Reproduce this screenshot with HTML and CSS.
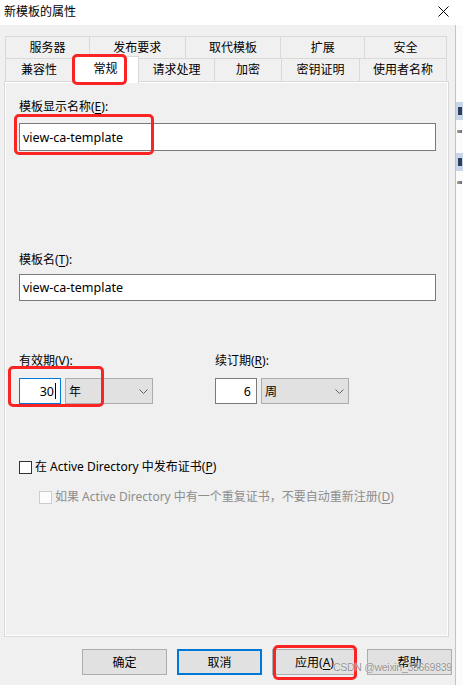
FILE: index.html
```html
<!DOCTYPE html>
<html lang="zh-CN">
<head>
    <meta charset="UTF-8">
    <meta name="viewport" content="width=device-width, initial-scale=1.0">
    <title>新模板的属性</title>
    <link rel="stylesheet" href="styles.css">
</head>
<body>
    <div class="screen">
        <div class="titlebar">
            <span class="title">新模板的属性</span>
            <svg class="close-icon" viewBox="0 0 11 11">
                <path d="M0.5 0.5L10.5 10.5M10.5 0.5L0.5 10.5"/>
            </svg>
        </div>

        <div class="main">
            <div class="dialog">
                <div class="tabs">
                    <div class="tab-row">
                        <div class="tab w84">服务器</div>
                        <div class="tab w96">发布要求</div>
                        <div class="tab w96">取代模板</div>
                        <div class="tab w84">扩展</div>
                        <div class="tab w82">安全</div>
                    </div>
                    <div class="tab-row">
                        <div class="tab w68">兼容性</div>
                        <div class="tab w66 active">常规</div>
                        <div class="tab w76">请求处理</div>
                        <div class="tab w67">加密</div>
                        <div class="tab w78">密钥证明</div>
                        <div class="tab w87">使用者名称</div>
                    </div>
                </div>

                <div class="panel">
                    <div class="field-label">模板显示名称(<u>E</u>):</div>
                    <div class="text-box tall">view-ca-template</div>

                    <div class="field-label second">模板名(<u>T</u>):</div>
                    <div class="text-box">view-ca-template</div>

                    <div class="periods">
                        <div class="period">
                            <div class="field-label">有效期(<u>V</u>):</div>
                            <div class="period-inputs">
                                <div class="num-box focused">30<span class="caret"></span></div>
                                <div class="combo">
                                    <span>年</span>
                                    <svg viewBox="0 0 9 5"><path d="M0.5 0.5L4.5 4.5L8.5 0.5"/></svg>
                                </div>
                            </div>
                        </div>
                        <div class="period">
                            <div class="field-label">续订期(<u>R</u>):</div>
                            <div class="period-inputs">
                                <div class="num-box">6</div>
                                <div class="combo">
                                    <span>周</span>
                                    <svg viewBox="0 0 9 5"><path d="M0.5 0.5L4.5 4.5L8.5 0.5"/></svg>
                                </div>
                            </div>
                        </div>
                    </div>

                    <div class="check-row">
                        <span class="check-box"></span>
                        <span>在 Active Directory 中发布证书(<u>P</u>)</span>
                    </div>
                    <div class="check-row sub disabled">
                        <span class="check-box"></span>
                        <span>如果 Active Directory 中有一个重复证书，不要自动重新注册(<u>D</u>)</span>
                    </div>
                </div>

                <div class="buttons">
                    <button class="btn">确定</button>
                    <button class="btn default">取消</button>
                    <button class="btn">应用(<u>A</u>)</button>
                    <button class="btn">帮助</button>
                </div>
            </div>

            <!-- окно позади диалога -->
            <div class="behind">
                <div class="behind-bar"><span></span></div>
                <div class="behind-mark"></div>
                <div class="behind-bar second"><span></span></div>
                <div class="behind-mark"></div>
            </div>
        </div>

        <!-- пометки поверх скриншота -->
        <div class="mark mark-tab"></div>
        <div class="mark mark-name"></div>
        <div class="mark mark-period"></div>
        <div class="mark mark-apply"></div>

        <div class="watermark">CSDN @weixin_33669839</div>
    </div>
</body>
</html>
```

FILE: styles.css
```css
* {
    margin: 0;
    padding: 0;
    box-sizing: border-box;
}

body {
    font-family: "Noto Sans", "Noto Sans CJK SC", sans-serif;
    font-size: 12px;
    color: #000;
    background: #f0f0f0;
}

.screen {
    position: relative;
    width: 463px;
    height: 685px;
    overflow: hidden;
    background: #f0f0f0;
}

u {
    text-decoration: underline;
    text-underline-offset: 2px;
}

/* заголовок окна */
.titlebar {
    height: 25px;
    background: #fff;
    display: flex;
    align-items: center;
    justify-content: space-between;
    padding: 0 14px 0 4px;
}

.title {
    line-height: 16px;
    margin-top: -1px;
}

.close-icon {
    width: 11px;
    height: 11px;
    margin-top: -2px;
    fill: none;
    stroke: #000;
    stroke-width: 1;
}

.main {
    display: flex;
    height: 660px;
}

.dialog {
    width: 455px;
}

/* вкладки */
.tabs {
    margin: 11px 0 0 5px;
    width: 442px;
}

.tab-row {
    display: flex;
}

.tab {
    height: 22px;
    display: flex;
    align-items: center;
    justify-content: center;
    border: 1px solid #d9d9d9;
    border-bottom: none;
    margin-left: -1px;
    background: #f0f0f0;
    line-height: 16px;
}

.tab-row .tab:first-child {
    margin-left: 0;
}

.tab-row + .tab-row .tab {
    height: 23px;
}

.tab.active {
    position: relative;
    z-index: 2;
    height: 27px !important;
    margin-top: -2px;
    margin-bottom: -2px;
    background: #fff;
    align-items: flex-start;
    padding-top: 4px;
}

.w66 { width: 67px; }
.w67 { width: 68px; }
.w68 { width: 68px; }
.w76 { width: 77px; }
.w78 { width: 79px; }
.w82 { width: 83px; }
.w84 { width: 85px; }
.w87 { width: 88px; }
.w96 { width: 97px; }

/* страница свойств */
.panel {
    position: relative;
    margin-left: 4px;
    width: 445px;
    height: 556px;
    border: 1px solid #d9d9d9;
    box-shadow: inset 1px 1px 0 #fff, inset -1px -1px 0 #fff;
    padding: 17px 0 0 14px;
}

.field-label {
    line-height: 16px;
    margin-bottom: 8px;
}

.field-label.second {
    margin-top: 101px;
    margin-bottom: 6px;
}

.text-box {
    width: 417px;
    height: 27px;
    border: 1px solid #7a7a7a;
    background: #fff;
    padding-left: 3px;
    display: flex;
    align-items: center;
    font-size: 12.5px;
}

.text-box.tall {
    height: 28px;
}

.periods {
    display: flex;
    margin-top: 52px;
}

.period {
    width: 196px;
}

.period .field-label {
    margin-bottom: 9px;
}

.period-inputs {
    display: flex;
    gap: 4px;
}

.num-box {
    width: 42px;
    height: 26px;
    border: 1px solid #7a7a7a;
    background: #fff;
    display: flex;
    align-items: center;
    justify-content: flex-end;
    padding-right: 5px;
    font-size: 12.5px;
}

.num-box.focused {
    border-color: #0078d7;
    padding-right: 4px;
}

.caret {
    width: 1px;
    height: 16px;
    background: #000;
    margin-left: 1px;
}

.combo {
    width: 88px;
    height: 26px;
    border: 1px solid #adadad;
    background: #e1e1e1;
    display: flex;
    align-items: center;
    justify-content: space-between;
    padding: 0 4px 0 3px;
}

.combo svg {
    width: 9px;
    height: 5px;
    fill: none;
    stroke: #606060;
    stroke-width: 1;
}

/* флажки */
.check-row {
    display: flex;
    align-items: center;
    gap: 3px;
    line-height: 16px;
    margin-top: 55px;
    font-size: 12px;
}

.check-box {
    width: 13px;
    height: 13px;
    border: 1px solid #333;
    background: #fff;
    flex-shrink: 0;
}

.check-row.sub {
    margin-top: 14px;
    padding-left: 20px;
}

.check-row.disabled {
    color: #8d8d8d;
}

.check-row.disabled .check-box {
    border-color: #cccccc;
    background: #fcfcfc;
}

/* кнопки */
.buttons {
    display: flex;
    gap: 10px;
    padding-left: 82px;
    margin-top: 12px;
}

.btn {
    width: 85px;
    height: 26px;
    border: 1px solid #adadad;
    background: #e1e1e1;
    font-family: inherit;
    font-size: 12px;
    color: #000;
}

.btn.default {
    border: 2px solid #0078d7;
}

/* окно позади */
.behind {
    flex: 1;
    border-left: 1px solid #c3c3c3;
    background: #fbfbfb;
    padding-top: 77px;
}

.behind-bar {
    height: 18px;
    background: #c9d6e8;
    padding: 5px 0 0 2px;
}

.behind-bar span {
    display: block;
    width: 4px;
    height: 8px;
    background: #2c3e5a;
}

.behind-bar.second {
    margin-top: 20px;
}

.behind-mark {
    width: 5px;
    height: 3px;
    margin: 10px 0 0 1px;
    background: linear-gradient(90deg, #e0a040, #3a6fc0);
}

/* красные рамки */
.mark {
    position: absolute;
    border: 3px solid #fb2424;
    border-radius: 5px;
    z-index: 5;
}

.mark-tab {
    left: 72px;
    top: 54px;
    width: 55px;
    height: 31px;
}

.mark-name {
    left: 14px;
    top: 114px;
    width: 140px;
    height: 41px;
}

.mark-period {
    left: 8px;
    top: 366px;
    width: 96px;
    height: 41px;
}

.mark-apply {
    left: 273px;
    top: 645px;
    width: 84px;
    height: 35px;
}

.watermark {
    position: absolute;
    left: 333px;
    top: 661px;
    z-index: 6;
    font-family: "Liberation Sans", sans-serif;
    font-size: 10.5px;
    letter-spacing: -0.3px;
    color: rgba(120, 120, 120, 0.8);
    text-shadow: 0 0 1px #fff;
    white-space: nowrap;
}
```
